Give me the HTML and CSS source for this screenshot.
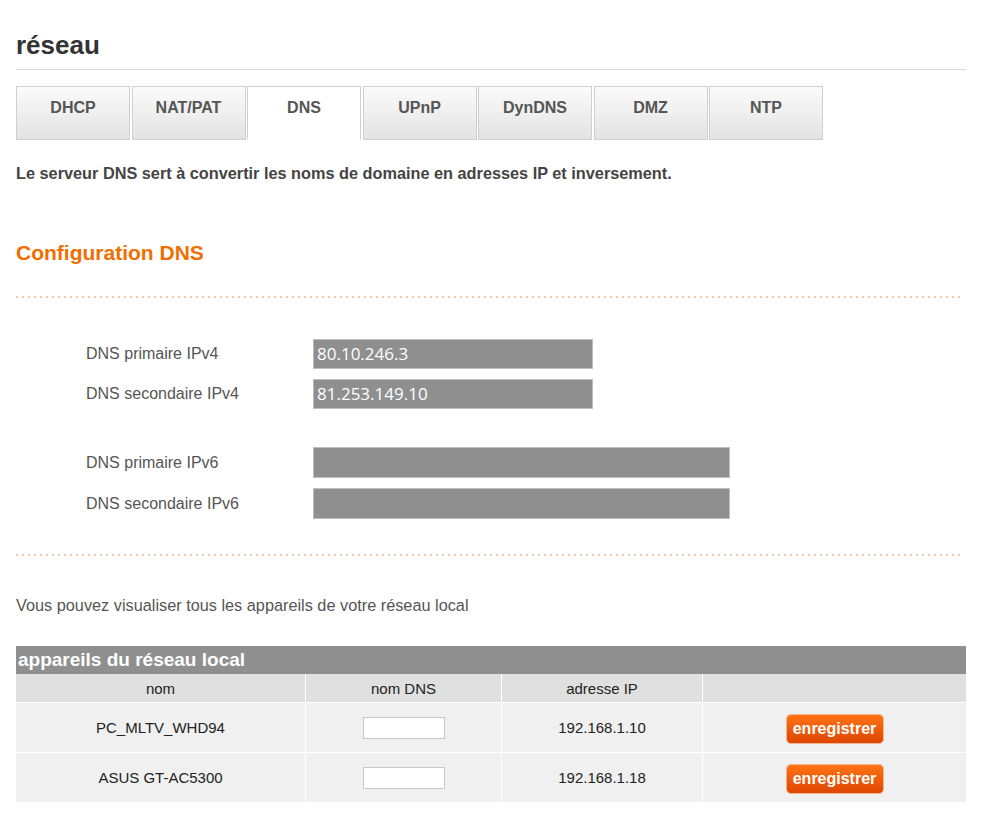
FILE: index.html
```html
<!DOCTYPE html>
<html lang="fr">
<head>
    <meta charset="UTF-8">
    <title>réseau</title>
    <link rel="stylesheet" href="styles.css">
</head>
<body>
    <div class="page">
        <h1 class="titre">réseau</h1>

        <div class="onglets">
            <div class="onglet">DHCP</div>
            <div class="onglet">NAT/PAT</div>
            <div class="onglet actif">DNS</div>
            <div class="onglet">UPnP</div>
            <div class="onglet">DynDNS</div>
            <div class="onglet">DMZ</div>
            <div class="onglet">NTP</div>
        </div>

        <p class="intro">Le serveur DNS sert à convertir les noms de domaine en adresses IP et inversement.</p>

        <h2 class="section">Configuration DNS</h2>
        <div class="pointilles"></div>

        <div class="form">
            <div class="groupe">
                <div class="ligne">
                    <label>DNS primaire IPv4</label>
                    <div class="champ">80.10.246.3</div>
                </div>
                <div class="ligne">
                    <label>DNS secondaire IPv4</label>
                    <div class="champ">81.253.149.10</div>
                </div>
            </div>
            <div class="groupe">
                <div class="ligne">
                    <label>DNS primaire IPv6</label>
                    <div class="champ large"></div>
                </div>
                <div class="ligne">
                    <label>DNS secondaire IPv6</label>
                    <div class="champ large"></div>
                </div>
            </div>
        </div>

        <div class="pointilles bas"></div>

        <p class="info">Vous pouvez visualiser tous les appareils de votre réseau local</p>

        <table class="appareils">
            <tr><th colspan="4" class="titre-table">appareils du réseau local</th></tr>
            <tr class="entetes">
                <td class="c1">nom</td>
                <td class="c2">nom DNS</td>
                <td class="c3">adresse IP</td>
                <td class="c4"></td>
            </tr>
            <tr>
                <td>PC_MLTV_WHD94</td>
                <td><input type="text" class="nom-dns"></td>
                <td>192.168.1.10</td>
                <td><button class="btn">enregistrer</button></td>
            </tr>
            <tr>
                <td>ASUS GT-AC5300</td>
                <td><input type="text" class="nom-dns"></td>
                <td>192.168.1.18</td>
                <td><button class="btn">enregistrer</button></td>
            </tr>
        </table>
    </div>
</body>
</html>
```

FILE: styles.css
```css
body {
    margin: 0;
    font-family: "Liberation Sans", Arial, sans-serif;
    color: #444;
    background: #fff;
}
.page {
    width: 950px;
    padding: 30px 0 0 16px;
}
.titre {
    margin: 0;
    font-size: 26px;
    line-height: 30px;
    color: #333;
    padding-bottom: 9px;
    border-bottom: 1px solid #d6d6d6;
}
.onglets {
    display: flex;
    gap: 1.5px;
    margin-top: 16px;
}
.onglet {
    width: 114px;
    height: 54px;
    box-sizing: border-box;
    border: 1px solid #cfcfcf;
    background: linear-gradient(#fbfbfb, #e3e3e3);
    font-size: 16px;
    font-weight: bold;
    color: #555;
    text-align: center;
    line-height: 42px;
}
.onglet.actif {
    background: #fff;
    border-bottom-color: #fff;
}
.intro {
    margin: 24px 0 0;
    font-size: 16.3px;
    line-height: 19px;
    font-weight: bold;
    color: #444;
}
.section {
    margin: 57px 0 0;
    font-size: 21px;
    line-height: 25px;
    color: #f16e00;
}
.pointilles {
    margin-top: 31px;
    width: 948px;
    height: 2px;
    background-image: linear-gradient(to right, #f4c9a6 2px, transparent 2px);
    background-size: 6px 2px;
}
.pointilles.bas {
    margin-top: 35px;
}
.form {
    margin-top: 41px;
    display: flex;
    flex-direction: column;
    gap: 38px;
}
.groupe {
    display: flex;
    flex-direction: column;
    gap: 10px;
}
.ligne {
    display: flex;
    align-items: center;
}
.ligne label {
    width: 227px;
    padding-left: 70px;
    font-size: 16px;
    color: #555;
}
.champ {
    width: 280px;
    height: 30px;
    box-sizing: border-box;
    background: #8f8f8f;
    border: 1px solid #bdbdbd;
    color: #fff;
    font-family: "Open Sans", sans-serif;
    font-size: 17px;
    line-height: 28px;
    padding-left: 3px;
}
.champ.large {
    width: 417px;
    height: 31px;
}
.info {
    margin: 40px 0 0;
    font-size: 16.3px;
    line-height: 19px;
    color: #555;
}
.appareils {
    margin-top: 31px;
    width: 950px;
    border-collapse: collapse;
    font-size: 15px;
    color: #222;
}
.appareils td {
    text-align: center;
    height: 49px;
    background: #f0f0f0;
    border-top: 1px solid #fff;
    border-left: 1px solid #fff;
    padding: 0;
}
.appareils td:first-child {
    border-left: none;
}
.titre-table {
    background: #8f8f8f;
    color: #fff;
    text-align: left;
    font-size: 19px;
    height: 28px;
    padding: 0 0 0 2px;
    line-height: 28px;
}
.appareils .entetes td {
    background: #e0e0e0;
    height: 28px;
    font-size: 15px;
    border-top: none;
}
.c1 { width: 289px; }
.c2 { width: 195px; }
.c3 { width: 200px; }
.nom-dns {
    width: 82px;
    height: 22px;
    box-sizing: border-box;
    border: 1px solid #c8c8c8;
    background: #fff;
    margin: 0;
    vertical-align: middle;
}
.btn {
    width: 98px;
    height: 30px;
    margin-top: 2px;
    border: 1px solid #f3b590;
    border-radius: 5px;
    background: linear-gradient(#ff7315, #dd4600);
    color: #fff;
    font-family: "Liberation Sans", Arial, sans-serif;
    font-weight: bold;
    font-size: 16px;
    padding: 0;
    cursor: pointer;
    vertical-align: middle;
}
```
